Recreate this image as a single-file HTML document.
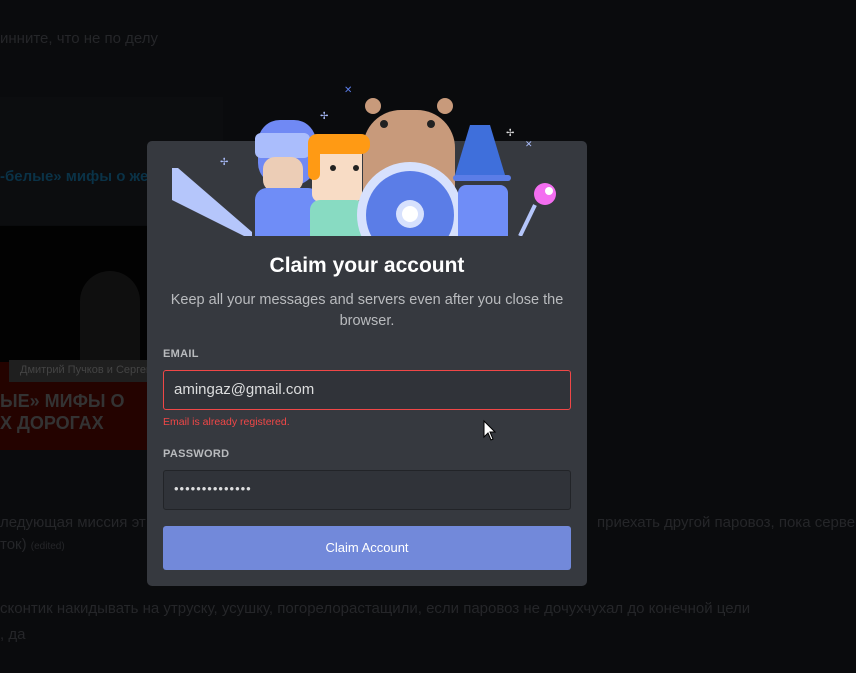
<!DOCTYPE html>
<html><head><meta charset="utf-8"><style>
*{margin:0;padding:0;box-sizing:border-box}
body{width:856px;height:673px;background:#0a0b0d;font-family:"Liberation Sans",sans-serif;position:relative;overflow:hidden}
.bg{position:absolute;color:#252629;font-size:15px;white-space:nowrap}
.modal{position:absolute;left:147px;top:141px;width:440px;height:445px;background:#36393f;border-radius:5px}
.title{position:absolute;left:0;width:440px;top:113px;text-align:center;color:#fff;font-size:21px;font-weight:bold}
.sub{position:absolute;left:20px;width:400px;top:149px;text-align:center;color:#b9bbbe;font-size:14.5px;line-height:21px}
.lbl{position:absolute;left:16px;color:#b9bbbe;font-size:11px;font-weight:bold;letter-spacing:.3px}
.inp{position:absolute;left:16px;width:408px;height:40px;background:#303339;border:1px solid #222428;border-radius:3px;color:#dcddde;font-size:15px;padding:10px 10px}
.btn{position:absolute;left:16px;top:385px;width:408px;height:44px;background:#7289da;border-radius:3px;color:#fff;font-size:13px;text-align:center;line-height:44px}
</style></head><body>
<div class="bg" style="left:0;top:30px">инните, что не по делу</div>
<div style="position:absolute;left:0;top:97px;width:223px;height:128px;background:#0c0d0f"></div>
<div class="bg" style="left:0;top:168px;color:#0a3247;font-weight:bold">-белые» мифы о жел</div>
<div style="position:absolute;left:0;top:226px;width:222px;height:224px;background:#020202">
 <div style="position:absolute;left:80px;top:45px;width:60px;height:100px;background:#0f0f0f;border-radius:30px 30px 0 0"></div>
 <div style="position:absolute;left:0;top:136px;width:222px;height:88px;background:#240300"></div>
 <div style="position:absolute;left:9px;top:134px;width:213px;height:22px;background:#1f1f1f;color:#444;font-size:11px;padding:4px 11px">Дмитрий Пучков и Сергей</div>
 <div style="position:absolute;left:0;top:164px;color:#333;font-size:18px;font-weight:bold;line-height:22px">ЫЕ» МИФЫ О<br>Х ДОРОГАХ</div>
</div>
<div class="bg" style="left:0;top:514px">ледующая миссия эт</div>
<div class="bg" style="left:597px;top:514px">приехать другой паровоз, пока сервер</div>
<div class="bg" style="left:0;top:536px">ток) <span style="font-size:10px">(edited)</span></div>
<div class="bg" style="left:0;top:600px">сконтик накидывать на утруску, усушку, погорелорастащили, если паровоз не дочухчухал до конечной цели</div>
<div class="bg" style="left:0;top:626px">, да</div>

<div class="modal">
 <div class="title">Claim your account</div>
 <div class="sub">Keep all your messages and servers even after you close the browser.</div>
 <div class="lbl" style="top:207px">EMAIL</div>
 <div class="inp" style="top:229px;border-color:#f04747">amingaz@gmail.com</div>
 <div style="position:absolute;left:16px;top:275px;color:#f04747;font-size:10.5px">Email is already registered.</div>
 <div class="lbl" style="top:307px">PASSWORD</div>
 <div class="inp" style="top:329px;font-size:13px;letter-spacing:1px">••••••••••••••</div>
 <div class="btn">Claim Account</div>
</div>

<svg style="position:absolute;left:0;top:0" width="856" height="673">
<defs><clipPath id="c"><rect x="0" y="0" width="856" height="236"/></clipPath></defs>
<g clip-path="url(#c)">
<polygon points="172,168 178,168 252,232 252,240 172,200" fill="#b5c6fb"/>
<rect x="258" y="120" width="58" height="65" rx="22" fill="#7089f4"/>
<rect x="255" y="133" width="55" height="25" rx="6" fill="#aabdfc"/>
<rect x="263" y="157" width="40" height="35" rx="12" fill="#eccdb6"/>
<rect x="255" y="188" width="65" height="60" rx="12" fill="#6f8df7"/>
<rect x="363" y="110" width="92" height="140" rx="38" fill="#c89a7b"/>
<circle cx="373" cy="106" r="8" fill="#c89a7b"/><circle cx="445" cy="106" r="8" fill="#c89a7b"/>
<circle cx="384" cy="124" r="4" fill="#222"/><circle cx="431" cy="124" r="4" fill="#222"/>
<rect x="312" y="140" width="50" height="62" rx="8" fill="#f8dcc5"/>
<rect x="308" y="134" width="62" height="20" rx="9" fill="#ff9a14"/>
<rect x="308" y="140" width="12" height="40" rx="6" fill="#ff9a14"/>
<circle cx="333" cy="168" r="3" fill="#222"/><circle cx="356" cy="168" r="3" fill="#222"/>
<rect x="310" y="200" width="55" height="45" rx="10" fill="#88dbc2"/>
<circle cx="410" cy="215" r="53" fill="#d7e1fd"/>
<circle cx="410" cy="215" r="44" fill="#5b7de7"/>
<circle cx="410" cy="214" r="14" fill="#d7e1fd"/><circle cx="410" cy="214" r="8" fill="#fff"/>
<polygon points="470,125 455,175 505,175 490,125" fill="#3f6fdb"/>
<rect x="453" y="175" width="58" height="6" rx="3" fill="#5b7de7"/>
<rect x="458" y="185" width="50" height="60" rx="8" fill="#6f8df7"/>
<path d="M478 150 a12 12 0 1 0 22 10 a10 10 0 0 1 -22 -10z" fill="#ffd23c"/>
<line x1="535" y1="205" x2="520" y2="236" stroke="#b5c6fb" stroke-width="4"/>
<circle cx="545" cy="194" r="11" fill="#f36ef0"/><circle cx="549" cy="191" r="4" fill="#fff"/>
</g>
<text x="344" y="93" fill="#5b7de7" font-size="10">✕</text>
<text x="320" y="119" fill="#aabdfc" font-size="10">✢</text>
<text x="220" y="165" fill="#aabdfc" font-size="10">✢</text>
<text x="506" y="136" fill="#ddd" font-size="10">✢</text>
<text x="525" y="147" fill="#aabdfc" font-size="9">✕</text>
<path d="M484 421 L484 437 L488 433 L491 440 L493 439 L490 432 L495 432 Z" fill="#fff" stroke="#000" stroke-width="1"/>
</svg>
</body></html>
